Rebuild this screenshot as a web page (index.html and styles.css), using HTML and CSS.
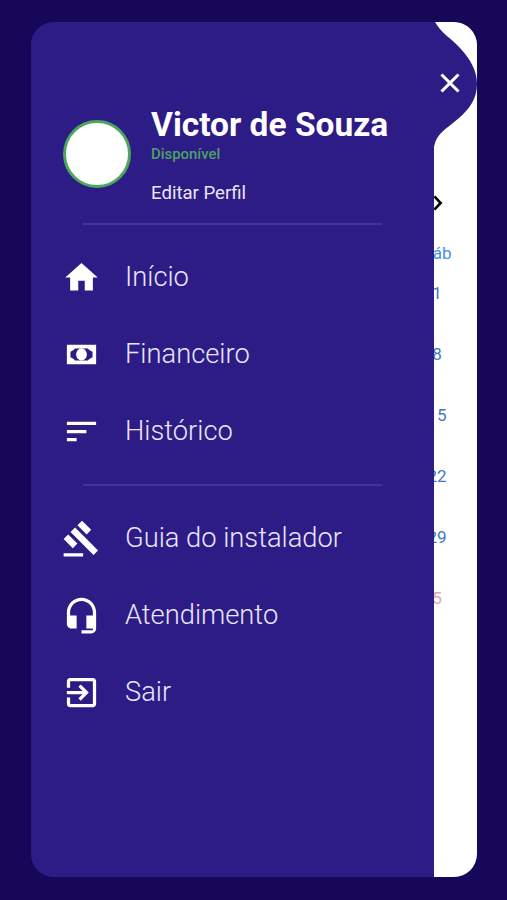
FILE: index.html
```
<!DOCTYPE html>
<html lang="pt-BR">
<head>
    <meta charset="UTF-8">
    <meta name="viewport" content="width=device-width, initial-scale=1.0">
    <title>Menu</title>
    <link rel="stylesheet" href="styles.css">
</head>
<body>
    <div class="screen">
        <div class="calendar">
            <svg class="next" viewBox="0 0 24 24"><path d="M8.9 17 13.600 12 8.9 7 10.500 5.600l6.200 6.400-6.200 6.400z"/></svg>
            <div class="weekday">Sáb</div>
            <div class="day">1</div>
            <div class="day">8</div>
            <div class="day">15</div>
            <div class="day">22</div>
            <div class="day">29</div>
            <div class="day other-month">5</div>
        </div>

        <div class="drawer">
            <svg class="bump" viewBox="0 0 44 130"><path d="M0 0H2C8 11 18 16 27 26C36 36 44 47 44 62C44 78 35 88 26 96C15 106 1 112 1 128V130H0z"/></svg>
            <button class="close" aria-label="Fechar">
                <svg viewBox="0 0 24 24"><path d="M19 6.41 17.59 5 12 10.59 6.41 5 5 6.41 10.59 12 5 17.59 6.41 19 12 13.41 17.59 19 19 17.59 13.41 12z"/></svg>
            </button>

            <div class="profile">
                <div class="avatar"></div>
                <div class="profile-info">
                    <h1>Victor de Souza</h1>
                    <div class="status">Disponível</div>
                    <a class="edit">Editar Perfil</a>
                </div>
            </div>

            <nav class="menu">
                <a class="item">
                    <svg viewBox="0 0 24 24"><path d="M10 20v-6h4v6h5v-8h3L12 3 2 12h3v8z"/></svg>
                    <span>Início</span>
                </a>
                <a class="item">
                    <svg viewBox="0 0 24 24"><path d="M3 6h18v12H3zM8 8.300C7.500 9.300 6.500 9.600 5.200 10.300v3.400c1.300.7 2.300 1 2.800 2h8c.5-1 1.500-1.300 2.800-2v-3.400c-1.300-.7-2.300-1-2.800-2z" fill-rule="evenodd"/><ellipse cx="12" cy="12" rx="3.3" ry="3.8"/></svg>
                    <span>Financeiro</span>
                </a>
                <a class="item">
                    <svg viewBox="0 0 24 24"><path d="M3 18h6v-2H3v2zM3 6v2h18V6H3zm0 7h12v-2H3v2z"/></svg>
                    <span>Histórico</span>
                </a>
            </nav>

            <nav class="menu menu-help">
                <a class="item">
                    <svg viewBox="0 0 24 24"><path d="M1 21h12v2H1zM5.245 8.07l2.83-2.827 14.14 14.142-2.828 2.828zM12.317 1l5.657 5.656-2.83 2.83-5.654-5.66zM3.825 9.485l5.657 5.657-2.828 2.828-5.657-5.657z"/></svg>
                    <span>Guia do instalador</span>
                </a>
                <a class="item">
                    <svg viewBox="0 0 24 24"><path d="M12 1c-4.97 0-9 4.03-9 9v7c0 1.66 1.34 3 3 3h3v-8H5v-2c0-3.87 3.13-7 7-7s7 3.13 7 7v2h-4v8h4v1h-7v2h6c1.66 0 3-1.34 3-3V10c0-4.97-4.03-9-9-9z"/></svg>
                    <span>Atendimento</span>
                </a>
                <a class="item">
                    <svg viewBox="0 0 24 24"><path d="M10.09 15.59 11.5 17l5-5-5-5-1.41 1.41L12.67 11H3v2h9.67l-2.58 2.59zM19 3H5c-1.11 0-2 .9-2 2v4h2V5h14v14H5v-4H3v4c0 1.1.89 2 2 2h14c1.1 0 2-.9 2-2V5c0-1.1-.9-2-2-2z"/></svg>
                    <span>Sair</span>
                </a>
            </nav>
        </div>
    </div>
</body>
</html>
```

FILE: styles.css
```
* { box-sizing: border-box; }
body { margin: 0; height: 900px; padding: 22px 30px 23px 31px; background: #170759; font-family: Roboto, "Liberation Sans", sans-serif; overflow: hidden; }
.screen { position: relative; height: 855px; border-radius: 23px; background: #2d1c85; overflow: hidden; }

/* calendar behind the drawer, only the last column shows */
.calendar { width: 71px; height: 100%; margin-left: auto; padding: 167px 9px 0 0; display: flex; flex-direction: column; align-items: center; font-size: 17px; color: #3f78c4; background: white; }
.next { width: 28px; height: 28px; fill: black; }
.weekday { height: 40px; line-height: 40px; margin-top: 16px; color: #4591dc; }
.day { height: 61px; line-height: 61px; }
.weekday + .day { margin-top: -10px; }
.other-month { color: #dca4b6; }

.drawer { position: absolute; top: 0; left: 0; width: 403px; height: 100%; padding-top: 82px; background: #2d1c85; color: white; }
.bump { position: absolute; top: 0; left: 402px; width: 44px; height: 130px; fill: #2d1c85; }
.close { position: absolute; top: 45px; left: 403px; width: 32px; height: 32px; padding: 0; border: none; background: none; cursor: pointer; }
.close svg { display: block; width: 32px; height: 32px; fill: white; stroke: white; stroke-width: 0.3; }

.profile { display: flex; margin: 0 32px; height: 120px; }
.avatar { flex-shrink: 0; width: 68px; height: 68px; margin: 16px 20px 0 0; border: 3px solid #4ca65b; border-radius: 50%; background: white; }
h1 { margin: 0; font-size: 33.5px; line-height: 42px; font-weight: 700; white-space: nowrap; }
.status { font-size: 14.9px; line-height: 17px; font-weight: 500; color: #4ca065; }
.edit { display: block; margin-top: 19px; font-size: 18.6px; line-height: 22px; color: #eae5fb; }

.menu { padding-top: 14px; }
.menu::before { content: ""; display: block; width: 299px; height: 2px; margin: -15px 0 14px 52px; background: #443391; }
.menu-help { padding-top: 29px; }
.menu-help::before { margin-bottom: 14px; }
.item { display: flex; align-items: center; height: 77px; padding-left: 31px; font-size: 27.3px; font-weight: 300; color: #eae5fb; }
.item svg { width: 39px; height: 39px; margin-right: 24px; fill: white; }
.item span { padding-bottom: 1px; }
```
